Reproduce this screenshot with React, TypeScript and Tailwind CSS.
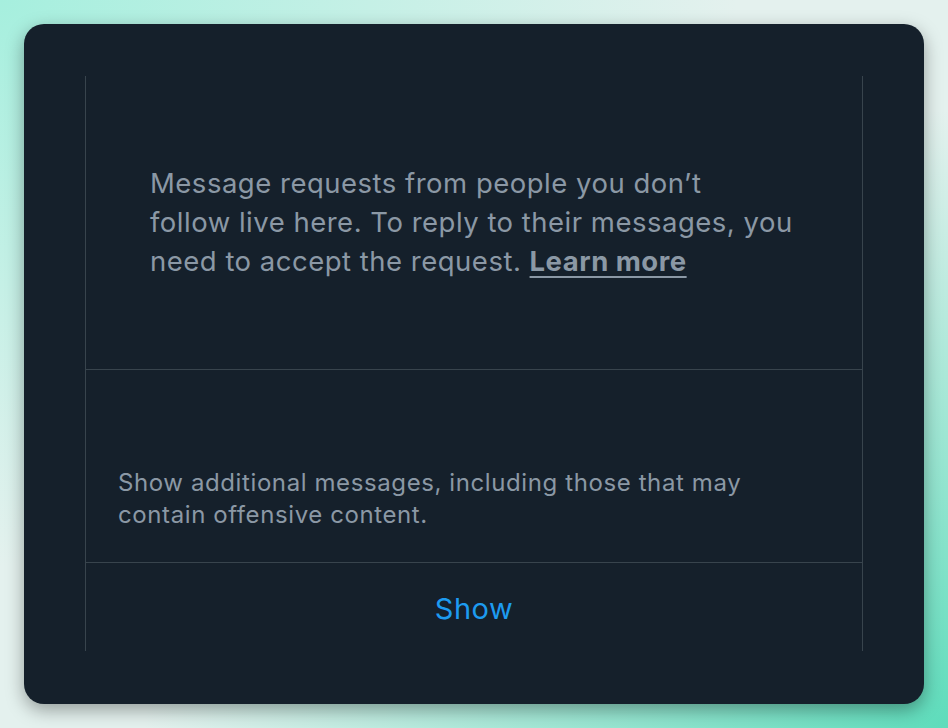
import React from "react";

export default function App() {
  return (
    <div className="w-[948px] h-[728px] bg-[#e4f1ee] bg-[radial-gradient(ellipse_at_0%_0%,#a6efde_0%,transparent_55%),radial-gradient(ellipse_at_100%_100%,#5edcbb_0%,transparent_60%)] p-[24px] font-['Inter',sans-serif] overflow-hidden">
      <div className="w-[900px] h-[680px] rounded-[20px] bg-[#15202b] shadow-[0_6px_18px_rgba(0,0,0,0.35)] pt-[52px] pb-[53px] px-[61px]">
        <div className="h-full border-x border-[#38444d] flex flex-col">
          <div className="h-[294px] shrink-0 flex items-center px-[64px] pb-[1px] border-b border-[#38444d]">
            <p className="text-[27.5px] leading-[39px] tracking-[0.5px] text-[#8b98a5] whitespace-nowrap">
              Message requests from people you don’t
              <br />
              follow live here. To reply to their messages, you
              <br />
              need to accept the request.{" "}
              <span className="font-bold underline underline-offset-[5px] decoration-[2px]">Learn more</span>
            </p>
          </div>
          <div className="h-[193px] shrink-0 flex items-end px-[32px] pb-[31px] border-b border-[#38444d]">
            <p className="text-[24px] leading-[32px] tracking-[0.6px] text-[#8b98a5] whitespace-nowrap">
              Show additional messages, including those that may
              <br />
              contain offensive content.
            </p>
          </div>
          <div className="h-[88px] shrink-0 flex items-center justify-center pt-[4px]">
            <span className="text-[29px] tracking-[0.5px] text-[#1d9bf0]">Show</span>
          </div>
        </div>
      </div>
    </div>
  );
}
